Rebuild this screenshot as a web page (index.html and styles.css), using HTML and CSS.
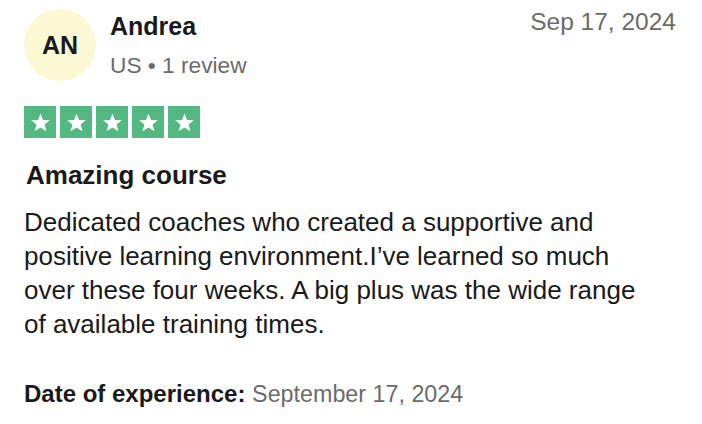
FILE: index.html
```html
<!DOCTYPE html>
<html lang="en">
<head>
    <meta charset="UTF-8">
    <title>Review</title>
    <link rel="stylesheet" href="styles.css">
</head>
<body>
    <article class="review">
        <header class="review-head">
            <div class="avatar">AN</div>
            <div class="author">
                <div class="name">Andrea</div>
                <div class="meta">US &bull; 1 review</div>
            </div>
            <div class="posted">Sep 17, 2024</div>
        </header>

        <div class="stars">
            <span class="star"><svg viewBox="0 0 24 24"><path d="M12 3.5l2.4 6.1 6.6.3-5.1 4.1 1.8 6.4L12 16.7l-5.7 3.7 1.8-6.4L3 9.9l6.6-.3z"/></svg></span>
            <span class="star"><svg viewBox="0 0 24 24"><path d="M12 3.5l2.4 6.1 6.6.3-5.1 4.1 1.8 6.4L12 16.7l-5.7 3.7 1.8-6.4L3 9.9l6.6-.3z"/></svg></span>
            <span class="star"><svg viewBox="0 0 24 24"><path d="M12 3.5l2.4 6.1 6.6.3-5.1 4.1 1.8 6.4L12 16.7l-5.7 3.7 1.8-6.4L3 9.9l6.6-.3z"/></svg></span>
            <span class="star"><svg viewBox="0 0 24 24"><path d="M12 3.5l2.4 6.1 6.6.3-5.1 4.1 1.8 6.4L12 16.7l-5.7 3.7 1.8-6.4L3 9.9l6.6-.3z"/></svg></span>
            <span class="star"><svg viewBox="0 0 24 24"><path d="M12 3.5l2.4 6.1 6.6.3-5.1 4.1 1.8 6.4L12 16.7l-5.7 3.7 1.8-6.4L3 9.9l6.6-.3z"/></svg></span>
        </div>

        <h2 class="title">Amazing course</h2>
        <p class="text">Dedicated coaches who created a supportive and positive learning environment.I’ve learned so much over these four weeks. A big plus was the wide range of available training times.</p>

        <p class="experience"><b>Date of experience:</b> <span class="exp-date">September 17, 2024</span></p>
    </article>
</body>
</html>
```

FILE: styles.css
```css
body {
    margin: 0;
    background: #ffffff;
    font-family: "Liberation Sans", Arial, sans-serif;
    color: #1a1a1a;
}

.review {
    padding: 9px 26px 0 24px;
}

.review-head {
    display: flex;
    align-items: flex-start;
}

.avatar {
    width: 72px;
    height: 72px;
    border-radius: 50%;
    background-color: #fcf8d4;
    display: flex;
    align-items: center;
    justify-content: center;
    font-size: 25px;
    font-weight: bold;
    color: #1a1a1a;
    flex-shrink: 0;
}

.author {
    margin-left: 14px;
    flex: 1;
}

.name {
    font-size: 25px;
    font-weight: bold;
    line-height: 34px;
}

.meta {
    font-size: 22.7px;
    color: #6b6b6b;
    line-height: 28px;
    margin-top: 8px;
}

.posted {
    font-size: 24.5px;
    color: #6b6b6b;
    line-height: 26px;
}

.stars {
    display: flex;
    gap: 4px;
    margin-top: 25px;
}

.star {
    width: 32px;
    height: 32px;
    background-color: #54b883;
    display: flex;
    align-items: center;
    justify-content: center;
}

.star svg {
    width: 25px;
    height: 25px;
    fill: #ffffff;
}

.title {
    font-size: 26px;
    font-weight: bold;
    margin: 21px 0 0 2px;
    line-height: 32px;
}

.text {
    font-size: 26px;
    line-height: 34px;
    margin: 14px 0 0;
    max-width: 625px;
}

.experience {
    font-size: 24px;
    margin: 39px 0 0;
    line-height: 28px;
}

.experience b {
    color: #1a1a1a;
}

.exp-date {
    font-size: 23.3px;
    color: #6b6b6b;
}
```
